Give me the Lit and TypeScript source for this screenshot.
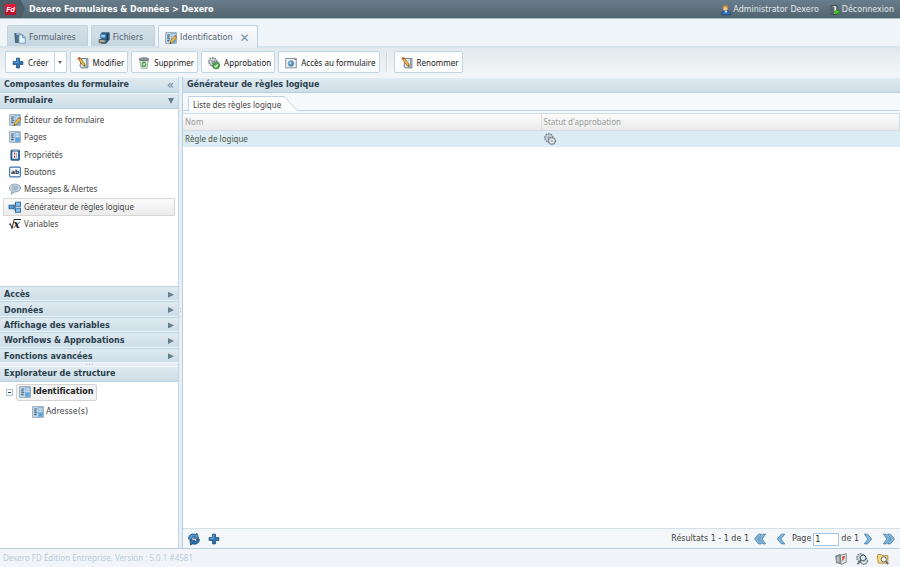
import { LitElement, html, css, svg } from "lit";
import { customElement, property, state } from "lit/decorators.js";
import { classMap } from "lit/directives/class-map.js";

const pageShape = svg`
  <rect x="1" y="1" width="14" height="14" fill="#8dbde4" stroke="#7d8f9b"/>
  <rect x="1.500" y="1.500" width="6.500" height="13" fill="#c9dbe9"/>
  <path d="M3 4h4M3 6.500h3M3 9h4M3 11.500h3" stroke="#3d5c76" stroke-width="1.500"/>
  <path d="M9 4h5M9 7h5" stroke="#e0effa" stroke-width="1.300"/>
  <rect x="8.500" y="9" width="5.500" height="5" fill="#5fa5dc"/>`;
const pencil = svg`
  <path d="M6.500 15.500l1-4 6-7 2.500 2.200-6 7z" fill="#f8bf3a" stroke="#8d6420" stroke-width=".8"/>
  <path d="M13.500 4.500l2.500 2.200-1 1.200-2.500-2.200z" fill="#d8574a"/>
  <path d="M6.500 15.500l.6-2.300 1.500 1.500z" fill="#333"/>`;
const renameShape = svg`
  <path d="M6 2h8.500v12.500H5.500L4 12z" fill="#e2e9ee" stroke="#5d6f7b" stroke-width="1.200"/>
  <path d="M12.700 2v12" stroke="#8fa3b0" stroke-width="1.500"/>
  <path d="M1 1.500l2.800-1L10.500 9.500l.3 3.200-3-1.500z" fill="#f7bd38" stroke="#7d5b22" stroke-width=".9"/>
  <path d="M1 1.500l2.800-1 1.300 1.800-2.800 1.500z" fill="#d84a3c"/>
  <path d="M10.800 12.700l-.2-1.800-1.500 1z" fill="#222"/>`;
const plus = svg`<path d="M6 1.500h4V6h4.500v4H10v4.500H6V10H1.500V6H6z" fill="#2f76b5" stroke="#1b4a76" stroke-width="1"/>
  <path d="M7.300 3v4.300H3" fill="none" stroke="#7db8e4"/>`;
const gears = svg`
  <circle cx="6.500" cy="6.500" r="5.300" fill="none" stroke="#7c878f" stroke-width="2.200" stroke-dasharray="2.200 1.100"/>
  <circle cx="6.500" cy="6.500" r="4.600" fill="#d3d8dc" stroke="#87929a" stroke-width=".8"/>
  <circle cx="6" cy="6" r="1.600" fill="#9aa5ad"/>
  <circle cx="10.500" cy="10.500" r="4.600" fill="none" stroke="#6d7880" stroke-width="2" stroke-dasharray="2 1"/>
  <circle cx="10.500" cy="10.500" r="4" fill="#e6e9eb" stroke="#87929a" stroke-width=".8"/>
  <circle cx="10.500" cy="10.500" r="1.500" fill="#a5afb6"/>`;

const shapes: Record<string, unknown> = {
  page: pageShape,
  pageEdit: svg`${pageShape}${pencil}`,
  rename: renameShape,
  plus,
  gears,
  forms: svg`<path d="M1 2h6v12H2z" fill="#4c6f8c" stroke="#39536a"/><path d="M3 1h7v3H3z" fill="#9db5c6"/>
    <path d="M6.500 4h5L15 7v8H6.500z" fill="#e3f1fb" stroke="#5a88ad"/><path d="M11.500 4v3.500H15" fill="#9cc6e6" stroke="#5a88ad"/>`,
  files: svg`<path d="M5 1h10v9l-4 5H5z" fill="#2f6da5" stroke="#27445e"/><path d="M12.500 2v9" stroke="#18354f" stroke-width="2"/>
    <path d="M3.500 3h7v5h-7z" fill="#72b4ea" stroke="#2b5f8f"/><path d="M1.500 10h9v4.500h-9z" fill="#85928c" stroke="#3d4b52"/>
    <path d="M5 5h4" stroke="#e8f4ff"/><path d="M3 12h5" stroke="#f1d37a"/>`,
  trash: svg`<path d="M2 3h12l-2 12H4.500z" fill="#dde2e3" stroke="#8b9498"/><ellipse cx="8" cy="3" rx="6.500" ry="2" fill="#8c979b" stroke="#5e686c"/>
    <path d="M5.500 9.500l2-2.800 2.800 1.500M10.800 9.500L9.500 12H6.200L5.500 10" fill="none" stroke="#43ab3f" stroke-width="1.900"/>`,
  approve: svg`${gears}<circle cx="11" cy="11.500" r="4.300" fill="#45a83e" stroke="#2d7a2a" stroke-width=".7"/>
    <path d="M8.700 11.500l1.700 1.800 3-3.500" fill="none" stroke="#fff" stroke-width="1.500"/>`,
  access: svg`<rect x="1" y="2" width="14" height="12.500" fill="#eef4f8" stroke="#7a8b98" stroke-width="1.200"/>
    <path d="M12.500 2.500h2v1.500h-2z" fill="#d9583b"/><circle cx="8" cy="8.800" r="4" fill="#4e8bb9" stroke="#91adc2"/><circle cx="7.200" cy="8" r="1.500" fill="#c1e0f3"/>`,
  properties: svg`<rect x="2.500" y="1.500" width="11.500" height="13.500" rx="1" fill="#2d699f" stroke="#1e4a75"/><rect x="4.500" y="3.500" width="7.500" height="9.500" fill="#eef7fd"/>
    <rect x="6" y="0" width="5" height="3" fill="#9bb5c8"/><path d="M7.500 4.500v3M7.500 9v3" stroke="#c83c3c" stroke-width="1.600"/><path d="M10 5v7" stroke="#7d98ad"/>`,
  bubble: svg`<path d="M8 1.500c4.300 0 7.500 2.200 7.500 5.200s-3.200 5.300-7.500 5.300l-1 0-4 3 .8-3.800C1.700 10.300.5 8.700.5 6.700.5 3.700 3.700 1.500 8 1.500z" fill="#c2d5e4" stroke="#788d9e"/>
    <path d="M4 5h8M4 7h8M4.500 9h6" stroke="#8097a9" stroke-width=".9"/>`,
  logic: svg`<path d="M5 8h3M8 3.500v9.500M8 3.500h2M8 13h2" stroke="#27435b" stroke-width="1.200" fill="none"/>
    <rect x="0" y="5.500" width="6.500" height="5" fill="#4f9fda" stroke="#245a8a"/><rect x="8.500" y="1.500" width="7" height="5.500" fill="#7fc0ef" stroke="#245a8a"/>
    <rect x="8.500" y="9.500" width="7" height="5.500" fill="#7fc0ef" stroke="#245a8a"/>`,
  user: svg`<path d="M1 15.500c0-4 2.500-6.500 7-6.500s7.500 2.500 7.500 6.500z" fill="#2b74c4" stroke="#173d6b"/><path d="M6 9l2 4 2-4z" fill="#fff"/>
    <circle cx="7" cy="5.500" r="3.800" fill="#f5c48d"/><path d="M3 6c-.5-4 1.500-6 4.300-6S12 3 10.500 6c-1-2-3-3-5-2.800z" fill="#c98a35"/>`,
  exit: svg`<path d="M2 1h9v14H2z" fill="#e7eaec" stroke="#273038" stroke-width="1.400"/><path d="M3 1.500l4 2v11L3 15z" fill="#56636c"/>
    <path d="M15.500 9.500H12V6.500l-6 5 6 4.500V13h3.500z" fill="#49c52c" stroke="#1e7a12" stroke-width=".8"/>`,
  refresh: svg`<path d="M1 8C0 3 5 0 10 2l2-1.500L14 7H7l2-2C6 4.500 5 6 5 9z" fill="#4a9bd6" stroke="#153f68"/>
    <path d="M15 8c1 5-4 8-9 6.500L3.500 16 2.500 9.500H9.500l-2 2c2.500.7 4-.8 4-3.500z" fill="#2a70ad" stroke="#153f68"/>`,
  book: svg`<path d="M1 4l6-2v12l-5-1z" fill="#9da6ab" stroke="#555f65"/><path d="M7 3l8-2v11l-7 3.500z" fill="#e4e9ec" stroke="#5b666c"/>
    <path d="M9.500 4.500l4-1-1.500 4-2 4z" fill="#d8412f"/><path d="M3 6v6M5 5.500v7" stroke="#ccd3d7"/>`,
  gearSearch: svg`${gears}<circle cx="9.500" cy="6.500" r="3.800" fill="#d8ebf6" stroke="#4b5961" stroke-width="1.300"/><path d="M7 9.500L2 15" stroke="#59666e" stroke-width="2.200"/>`,
  folderSearch: svg`<path d="M.5 4l1-2h4.500l1 1.500h7.500V13.500h-13z" fill="#f6d97f" stroke="#a57a22"/><circle cx="9" cy="8.500" r="3.500" fill="#eef7fb" stroke="#5d686f" stroke-width="1.300"/>
    <path d="M11.500 11l3.500 4" stroke="#5d686f" stroke-width="2"/>`,
  prev: svg`<path d="M8.500 1.500h4.500L8 8l5 6.500H8.500L3 8z" fill="#79b8e0" stroke="#49799f"/>`,
  next: svg`<path d="M7.500 1.500H3L8 8l-5 6.500h4.500L13 8z" fill="#79b8e0" stroke="#49799f"/>`,
  first: svg`<g fill="#79b8e0" stroke="#49799f"><path d="M12 1.500h3.500L11 8l4.500 6.500H12L7 8z"/><path d="M6 1.500h4L5.500 8l4.500 6.500H6L.8 8z"/></g>`,
  last: svg`<g fill="#79b8e0" stroke="#49799f"><path d="M4 1.500H.5L5 8 .5 14.500H4L9 8z"/><path d="M10 1.500H6L10.500 8 6 14.500h4L15.200 8z"/></g>`,
};

@customElement("ui-icon")
export class UiIcon extends LitElement {
  static styles = css`
    :host { display: inline-flex; flex: none; width: 12px; height: 12px; }
    .glyph { width: 100%; height: 100%; overflow: visible; }
    .mark { font: bold 8px "DejaVu Sans", sans-serif; fill: #1b2d3d; }
    .var { font: italic bold 14px "DejaVu Serif", serif; fill: #222; }
  `;
  @property() name = "";
  render() {
    let body = shapes[this.name];
    if (this.name === "button")
      body = svg`<rect x=".8" y="1.500" width="14.400" height="13" rx="1.500" fill="#f4faff" stroke="#3777b0" stroke-width="1.500"/><text class="mark" x="2.500" y="11">ab</text>`;
    if (this.name === "variable")
      body = svg`<path d="M0 8.500l1.800-.8L4 14 6.800 2H16" fill="none" stroke="#222" stroke-width="1.300"/><text class="var" x="6" y="13.500">x</text>`;
    return html`<svg class="glyph" viewBox="0 0 16 16" aria-hidden="true">${body}</svg>`;
  }
}

const components = [
  ["pageEdit", "Éditeur de formulaire"],
  ["page", "Pages"],
  ["properties", "Propriétés"],
  ["button", "Boutons"],
  ["bubble", "Messages & Alertes"],
  ["logic", "Générateur de règles logique"],
  ["variable", "Variables"],
];
const sections = ["Accès", "Données", "Affichage des variables", "Workflows & Approbations", "Fonctions avancées"];

@customElement("app-root")
export class AppRoot extends LitElement {
  static styles = css`
    :host {
      display: flex; flex-direction: column; min-height: 100vh; background: #fff; color: #444;
      font: 8px/12px "DejaVu Sans", Verdana, sans-serif; font-variant-ligatures: none;
    }
    * { box-sizing: border-box; }
    button, input { font: inherit; color: inherit; margin: 0; }
    button { padding: 0; border: 0; background: none; text-align: left; white-space: nowrap; }
    a { color: inherit; text-decoration: none; }
    ul, h1, h2 { margin: 0; padding: 0; list-style: none; font-size: inherit; }

    .top { display: flex; height: 19px; background: linear-gradient(#687d8c, #53646f); border-bottom: 1px solid #a9c0ce; color: #e3ebf0; }
    .brand { display: flex; align-items: center; width: 25px; padding-left: 5px; background: #4d5d68; clip-path: polygon(0 0, 21px 0, 25px 50%, 21px 100%, 0 100%); }
    .logo { width: 11px; height: 11px; background: linear-gradient(#e5203d, #b80d2c); color: #fff; font: italic bold 7px/11px "Liberation Sans", sans-serif; text-align: center; }
    .title { flex: 1; padding: 2px 0 0 4px; font-weight: bold; line-height: 16px; color: #fff; }
    .account { display: flex; align-items: center; gap: 11px; padding: 1px 6px 0 0; }
    .account a { display: flex; align-items: center; gap: 2px; }
    .account ui-icon { width: 10px; height: 10px; }

    .tabs { display: flex; align-items: flex-end; gap: 3px; height: 29px; padding-left: 7px; background: #f0f5fa; border-bottom: 2px solid #d8e4ec; }
    .tab { display: flex; align-items: center; gap: 3px; height: 21px; padding: 3px 11px 0 6px; border: 1px solid #bcd2e0; border-bottom: 0; border-radius: 2px 2px 0 0; background: linear-gradient(#d4e0e8, #c5d5df); color: #52616b; }
    .tab.current { height: 23px; padding: 1px 7px 0 6px; margin-bottom: -2px; background: linear-gradient(#f8fbfe, #e9f0f5); }
    .close { margin-left: 4px; color: #7893a5; font: 12px/12px "DejaVu Sans", sans-serif; }

    .tools { display: flex; align-items: center; gap: 3px; height: 29px; padding: 0 5px; background: linear-gradient(#e2e9ec, #f3f6f8); border-bottom: 1px solid #eef4f8; color: #222; font-family: "Noto Sans", sans-serif; }
    .tool { display: flex; align-items: center; gap: 4px; height: 22px; padding: 1px 3px 0 6px; border: 1px solid #c0d5e3; border-radius: 2px; background: linear-gradient(#fff, #fafbfc); }
    .split { display: flex; }
    .split .tool { border-right: 0; border-radius: 2px 0 0 2px; padding-right: 5px; }
    .arrow { width: 13px; height: 22px; border: 1px solid #c0d5e3; border-radius: 0 2px 2px 0; background: #fff; display: grid; place-items: center; }
    .arrow::after { content: ""; border: 2px solid transparent; border-top: 3px solid #666; border-bottom: 0; }
    .sep { width: 2px; height: 20px; margin: 0 3px; border-left: 1px solid #c4d3dd; background: #fff; }

    .body { flex: 1; display: grid; grid-template-columns: 179px 3px minmax(0, 1fr); background: #e6eff6; }
    .side { display: flex; flex-direction: column; background: #fff; border-right: 1px solid #c0d6e4; }
    .bar { display: flex; align-items: center; justify-content: space-between; width: 100%; height: 16px; padding: 0 4px; border-top: 1px solid #f2f7fa; border-bottom: 1px solid #b8cfdd; background: linear-gradient(#dfeaf1, #cddde7); color: #2b3f4c; font-weight: bold; }
    .collapse { color: #6e8797; font: 12px/12px "DejaVu Sans", sans-serif; }
    .panel { display: flex; flex-direction: column; height: 286px; }
    .list { display: grid; grid-auto-rows: 1fr; height: 122px; margin: 2px 3px 0; font-family: "Noto Sans", sans-serif; }
    .item { display: flex; align-items: center; gap: 3px; width: 100%; height: 100%; padding-left: 5px; border: 1px solid transparent; }
    .item.current { border-color: #d6d6d6; background: linear-gradient(#fafafa, #ececec); border-radius: 1px; }
    .closed { display: grid; grid-auto-rows: minmax(0, 1fr); height: 77px; margin-top: auto; }
    .closed .bar { height: 100%; padding-top: 2px; border-top-color: #bdd2df; border-bottom-color: #f0f6fa; line-height: 11px; }
    .tri { width: 6px; height: 6px; background: #65808f; clip-path: polygon(0 0, 100% 50%, 0 100%); }
    .tri.open { clip-path: polygon(0 0, 100% 0, 50% 100%); }
    .handle { display: grid; place-items: center; background: #e6eff6; }
    .handle::after { content: ""; width: 1px; height: 7px; border-top: 1px solid #a9bfcd; border-bottom: 1px solid #a9bfcd; background: linear-gradient(transparent 2px, #a9bfcd 2px 3px, transparent 3px); }
    .handle.flat { height: 3px; }
    .handle.flat::after { width: 7px; height: 1px; border: 0; background: repeating-linear-gradient(90deg, #a9bfcd 0 1px, transparent 1px 3px); }
    .tree { padding: 2px 6px; }
    .node { display: flex; align-items: center; gap: 2px; height: 16px; }
    .node.child { margin: 4px 0 0 26px; }
    .toggle { display: grid; place-items: center; width: 7px; height: 7px; margin-right: 1px; border: 1px solid #a9c4d8; background: #fff; }
    .toggle::after { content: ""; width: 3px; height: 1px; background: #345; }
    .chosen { display: flex; align-items: center; gap: 2px; height: 17px; padding: 0 2px; border: 1px solid #d4d4d4; border-radius: 2px; background: #f4f4f4; font-weight: bold; color: #222; }

    .main { display: flex; flex-direction: column; background: #fff; border-left: 1px solid #b8cfdd; }
    .subtabs { display: flex; align-items: flex-end; height: 18px; padding-left: 5px; background: #f6f9fc; border-bottom: 1px solid #bdd3e2; isolation: isolate; }
    .subtab { position: relative; height: 15px; padding: 2px 18px 0 5px; margin-bottom: -1px; font-family: "Noto Sans", sans-serif; }
    .edge { position: absolute; right: 0; top: 0; width: 16px; height: 100%; z-index: -1; }
    .fill { position: absolute; inset: 0 15px 0 0; border: 1px solid #bdd3e2; border-width: 1px 0 0 1px; border-radius: 2px 0 0 0; background: #fff; z-index: -1; }
    .strip { height: 2px; background: #f6f9fc; }
    .grid { width: 100%; table-layout: fixed; border-collapse: separate; border-spacing: 0; border-top: 1px solid #ccdde8; }
    .grid th { height: 17px; padding: 0 2px; border-right: 1px solid #d5dde2; border-bottom: 1px solid #d5dde2; background: linear-gradient(#fcfcfc, #ebebeb); color: #999; font-family: "Noto Sans", sans-serif; font-weight: normal; text-align: left; }
    .grid td { height: 16px; padding: 0 2px; background: #dcecf4; color: #4c5642; font-family: "Noto Sans", sans-serif; }
    .grid ui-icon { display: flex; }
    .pager { display: flex; align-items: center; height: 20px; margin-top: auto; padding: 1px 5px 0; border-top: 1px solid #d5dfe6; background: #f4f7f9; }
    .pager button { display: flex; }
    .adders { display: flex; gap: 8px; margin-right: auto; }
    .jump { display: flex; align-items: center; gap: 2px; margin: 0 3px 0 5px; }
    .jump input { width: 26px; height: 13px; padding: 0 1px; border: 1px solid #a5c5e2; background: #fff; color: #222; }
    .stepper { display: flex; gap: 9px; }
    .total { margin-right: 5px; }

    .foot { display: flex; align-items: center; justify-content: space-between; height: 19px; padding: 0 11px 0 3px; border-top: 1px solid #b8cfdd; background: #f1f5fa; color: #b9cbd6; font-family: "Noto Sans", sans-serif; }
    .shortcuts { display: flex; gap: 9px; padding-top: 1px; }
    .shortcuts button { display: flex; }
  `;

  @state() private current = "Générateur de règles logique";

  private tool(icon: string, label: string) {
    return html`<button class="tool"><ui-icon name=${icon}></ui-icon>${label}</button>`;
  }

  render() {
    return html`
      <header class="top">
        <div class="brand"><span class="logo">Fd</span></div>
        <h1 class="title">Dexero Formulaires &amp; Données &gt; Dexero</h1>
        <nav class="account">
          <a href="#compte"><ui-icon name="user"></ui-icon>Administrator Dexero</a>
          <a href="#sortie"><ui-icon name="exit"></ui-icon>Déconnexion</a>
        </nav>
      </header>
      <nav class="tabs">
        <button class="tab"><ui-icon name="forms"></ui-icon>Formulaires</button>
        <button class="tab"><ui-icon name="files"></ui-icon>Fichiers</button>
        <div class="tab current"><ui-icon name="pageEdit"></ui-icon>Identification<button class="close" aria-label="Fermer">✕</button></div>
      </nav>
      <div class="tools">
        <div class="split">${this.tool("plus", "Créer")}<button class="arrow" aria-label="Autres choix"></button></div>
        ${this.tool("rename", "Modifier")} ${this.tool("trash", "Supprimer")} ${this.tool("approve", "Approbation")}
        ${this.tool("access", "Accès au formulaire")}
        <span class="sep"></span>
        ${this.tool("rename", "Renommer")}
      </div>
      <div class="body">
        <aside class="side">
          <div class="panel">
            <h2 class="bar">Composantes du formulaire<button class="collapse" aria-label="Réduire">«</button></h2>
            <button class="bar">Formulaire<span class="tri open"></span></button>
            <ul class="list">
              ${components.map(([icon, label]) => html`<li>
                <button class=${classMap({ item: true, current: label === this.current })} @click=${() => (this.current = label)}>
                  <ui-icon name=${icon}></ui-icon>${label}
                </button></li>`)}
            </ul>
            <div class="closed">${sections.map((s) => html`<button class="bar">${s}<span class="tri"></span></button>`)}</div>
          </div>
          <div class="handle flat"></div>
          <h2 class="bar">Explorateur de structure</h2>
          <div class="tree">
            <div class="node"><button class="toggle" aria-label="Replier"></button><button class="chosen"><ui-icon name="page"></ui-icon>Identification</button></div>
            <button class="node child"><ui-icon name="page"></ui-icon>Adresse(s)</button>
          </div>
        </aside>
        <div class="handle"></div>
        <main class="main">
          <h2 class="bar">Générateur de règles logique</h2>
          <div class="subtabs">
            <button class="subtab"><span class="fill"></span>Liste des règles logique
              <svg class="edge" viewBox="0 0 16 15" aria-hidden="true"><path d="M0 .5h1L14 14.500h2V15H0z" fill="#fff"/><path d="M0 .5h1.500L14 14.500h2" fill="none" stroke="#bdd3e2"/></svg>
            </button>
          </div>
          <div class="strip"></div>
          <table class="grid">
            <thead><tr><th>Nom</th><th>Statut d'approbation</th></tr></thead>
            <tbody><tr><td>Règle de logique</td><td><ui-icon name="gears"></ui-icon></td></tr></tbody>
          </table>
          <div class="pager">
            <div class="adders">
              <button aria-label="Actualiser"><ui-icon name="refresh"></ui-icon></button>
              <button aria-label="Ajouter"><ui-icon name="plus"></ui-icon></button>
            </div>
            <span class="total">Résultats 1 - 1 de 1</span>
            <div class="stepper">
              <button aria-label="Première page"><ui-icon name="first"></ui-icon></button>
              <button aria-label="Page précédente"><ui-icon name="prev"></ui-icon></button>
            </div>
            <div class="jump"><label for="page">Page</label><input id="page" value="1" /><span>de 1</span></div>
            <div class="stepper">
              <button aria-label="Page suivante"><ui-icon name="next"></ui-icon></button>
              <button aria-label="Dernière page"><ui-icon name="last"></ui-icon></button>
            </div>
          </div>
        </main>
      </div>
      <footer class="foot">
        <span>Dexero FD Édition Entreprise, Version : 5.0.1 #4581</span>
        <div class="shortcuts">
          <button aria-label="Guide"><ui-icon name="book"></ui-icon></button>
          <button aria-label="Rechercher un traitement"><ui-icon name="gearSearch"></ui-icon></button>
          <button aria-label="Rechercher un dossier"><ui-icon name="folderSearch"></ui-icon></button>
        </div>
      </footer>
    `;
  }
}
